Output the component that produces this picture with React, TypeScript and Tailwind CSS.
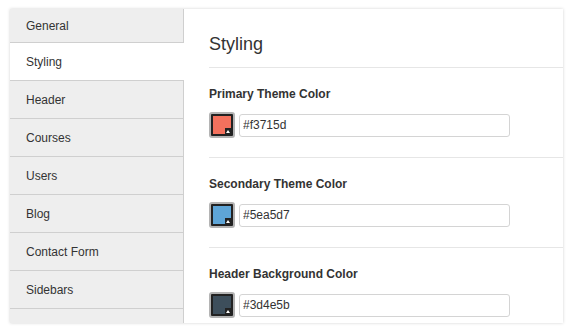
import React from 'react';

const TABS = ['General', 'Styling', 'Header', 'Courses', 'Users', 'Blog', 'Contact Form', 'Sidebars'];

const COLORS = [
  { label: 'Primary Theme Color', value: '#f3715d' },
  { label: 'Secondary Theme Color', value: '#5ea5d7' },
  { label: 'Header Background Color', value: '#3d4e5b' },
];

const Swatch: React.FC<{ color: string }> = ({ color }) => (
  <div className="w-[26px] h-[26px] shrink-0 rounded-[3px] border-2 border-[#b4b4b4] bg-[#222] p-[2px]">
    <div className="relative w-full h-full" style={{ backgroundColor: color }}>
      <div className="absolute right-0 bottom-0 w-[6px] h-[6px] bg-[#222] flex items-end justify-center">
        <svg width="4" height="3" viewBox="0 0 4 3" className="mb-[1px]">
          <polygon points="2,0 4,3 0,3" fill="#fff" />
        </svg>
      </div>
    </div>
  </div>
);

export default function App() {
  const active = 'Styling';

  return (
    <div className="w-[573px] h-[334px] bg-white pt-[9px] pl-[10px] font-['Liberation_Sans',Arial,sans-serif] text-[#333]">
      <div className="flex w-[553px] h-[314px] overflow-hidden bg-white shadow-[0_0_3px_rgba(0,0,0,0.18)]">
        {/* Sidebar tabs */}
        <div className="w-[174px] shrink-0 flex flex-col bg-[#eeeeee]">
          {TABS.map((tab, i) => (
            <div
              key={tab}
              className={`flex items-center pl-[16px] text-[12px] border-b border-[#cfcfcf] ${i === 0 ? 'h-[34px]' : 'h-[38px]'} ${
                tab === active ? 'bg-white' : 'border-r'
              }`}
            >
              {tab}
            </div>
          ))}
          <div className="flex-1 border-r border-[#cfcfcf]" />
        </div>

        {/* Content */}
        <div className="flex-1 pl-[25px]">
          <div className="h-[59px] pt-[24px] border-b border-[#e6e6e6]">
            <h2 className="text-[18px] leading-[22px] font-normal">Styling</h2>
          </div>
          {COLORS.map((c) => (
            <div key={c.label} className="h-[90px] pt-[19px] border-b border-[#e6e6e6]">
              <div className="text-[12px] leading-[14px] font-bold">{c.label}</div>
              <div className="mt-[11px] flex items-center gap-[4px]">
                <Swatch color={c.value} />
                <input
                  readOnly
                  value={c.value}
                  className="w-[271px] h-[23px] rounded-[3px] border border-[#d4d4d4] bg-white px-[3px] text-[12px] text-[#333] outline-none font-['Liberation_Sans',Arial,sans-serif]"
                />
              </div>
            </div>
          ))}
        </div>
      </div>
    </div>
  );
}
